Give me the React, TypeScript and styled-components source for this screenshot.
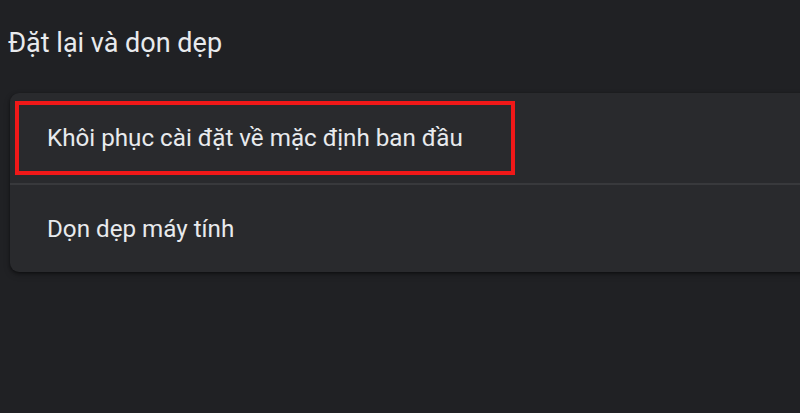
import React from "react";
import styled, { createGlobalStyle } from "styled-components";

const GlobalStyle = createGlobalStyle`
  html, body {
    margin: 0;
    padding: 0;
    background: #202124;
  }
  body {
    font-family: Roboto, "Noto Sans", "Liberation Sans", sans-serif;
    color: #e8eaed;
    -webkit-font-smoothing: antialiased;
  }
`;

const Page = styled.div`
  width: 800px;
  height: 413px;
  overflow: hidden;
  background: #202124;
  padding: 0 0 0 10px;
  box-sizing: border-box;
`;

const SectionTitle = styled.h2`
  margin: 0;
  height: 93px;
  display: flex;
  align-items: center;
  padding: 0 0 8px 0;
  margin-left: -2px;
  box-sizing: border-box;
  font-size: 27px;
  font-weight: 400;
  color: #e8eaed;
`;

const Card = styled.div`
  width: calc(100% + 20px);
  background: #292a2d;
  border-radius: 9px;
  box-shadow: 0 1px 3px rgba(0, 0, 0, 0.45), 0 3px 6px rgba(0, 0, 0, 0.25);
  overflow: hidden;
`;

const Row = styled.div<{ $divider?: boolean; $padded?: boolean }>`
  height: ${(p) => (p.$divider ? "89px" : "90px")};
  display: flex;
  align-items: stretch;
  box-sizing: border-box;
  padding: ${(p) => (p.$padded ? "8px 5px" : "0 0 0 37px")};
  border-top: ${(p) => (p.$divider ? "2px solid #38393c" : "none")};
`;

const Highlight = styled.div`
  width: 500px;
  box-sizing: border-box;
  border: 4px solid #f01818;
  display: flex;
  align-items: center;
  padding-left: 28px;
`;

const Label = styled.span`
  display: flex;
  align-items: center;
  font-size: 24.2px;
  font-weight: 400;
  color: #e8eaed;
  white-space: nowrap;
`;

export default function App() {
  return (
    <>
      <GlobalStyle />
      <Page>
        <SectionTitle>Đặt lại và dọn dẹp</SectionTitle>
        <Card>
          <Row $padded>
            <Highlight>
              <Label>Khôi phục cài đặt về mặc định ban đầu</Label>
            </Highlight>
          </Row>
          <Row $divider>
            <Label>Dọn dẹp máy tính</Label>
          </Row>
        </Card>
      </Page>
    </>
  );
}
